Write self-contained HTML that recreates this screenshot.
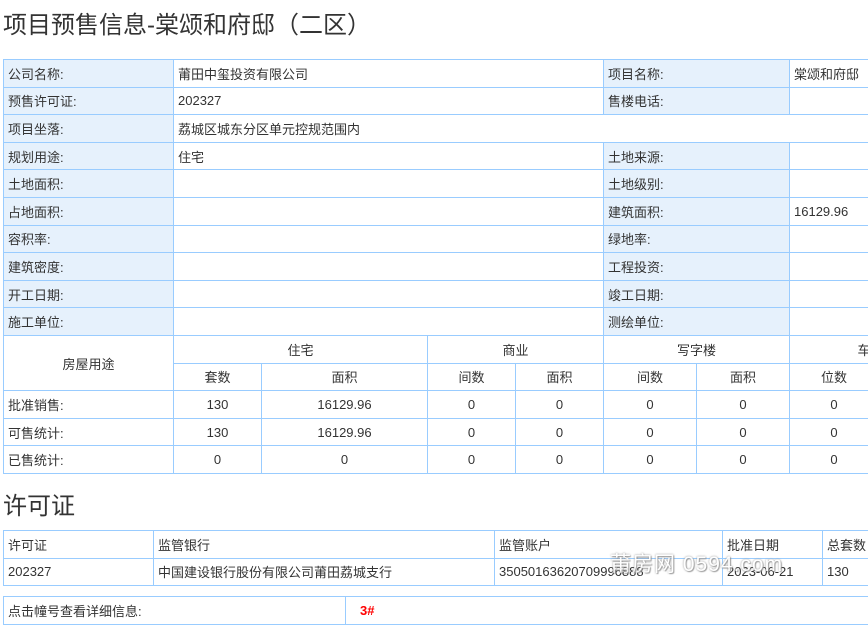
<!DOCTYPE html>
<html><head><meta charset="utf-8"><style>
body{margin:0;background:#fff;width:868px;height:629px;overflow:hidden;position:relative;font-family:"Liberation Sans","Noto Sans CJK SC",sans-serif;color:#333;font-size:13px}
h1{position:absolute;left:3px;top:9px;margin:0;font-size:24px;font-weight:normal;line-height:34px;color:#333}
h2{position:absolute;left:3px;top:490px;margin:0;font-size:24px;font-weight:normal;line-height:34px;color:#333}
table{position:absolute;border-collapse:collapse;table-layout:fixed}
td{border:1px solid #9cf;padding:0 0 0 4px;height:26.6px;white-space:nowrap;overflow:hidden}
.l{background:#e6f1fc}
.c td{text-align:center;padding:0}
.wm{position:absolute;left:610px;top:548px;font-size:21px;color:#fff;text-shadow:0 0 2px #888,1px 1px 1px #999;letter-spacing:1px;opacity:.9}
</style></head><body>
<h1>项目预售信息-棠颂和府邸（二区）</h1>
<table style="left:3px;top:59px;width:886px">
<colgroup><col style="width:170px"><col style="width:430px"><col style="width:186px"><col style="width:100px"></colgroup>
<tr><td class="l">公司名称:</td><td>莆田中玺投资有限公司</td><td class="l">项目名称:</td><td>棠颂和府邸（</td></tr>
<tr><td class="l">预售许可证:</td><td>202327</td><td class="l">售楼电话:</td><td></td></tr>
<tr><td class="l">项目坐落:</td><td colspan="3">荔城区城东分区单元控规范围内</td></tr>
<tr><td class="l">规划用途:</td><td>住宅</td><td class="l">土地来源:</td><td></td></tr>
<tr><td class="l">土地面积:</td><td></td><td class="l">土地级别:</td><td></td></tr>
<tr><td class="l">占地面积:</td><td></td><td class="l">建筑面积:</td><td>16129.96</td></tr>
<tr><td class="l">容积率:</td><td></td><td class="l">绿地率:</td><td></td></tr>
<tr><td class="l">建筑密度:</td><td></td><td class="l">工程投资:</td><td></td></tr>
<tr><td class="l">开工日期:</td><td></td><td class="l">竣工日期:</td><td></td></tr>
<tr><td class="l">施工单位:</td><td></td><td class="l">测绘单位:</td><td></td></tr>
</table>
<table class="c" style="left:3px;top:335px;width:948px">
<colgroup><col style="width:170px"><col style="width:88px"><col style="width:166px"><col style="width:88px"><col style="width:88px"><col style="width:93px"><col style="width:93px"><col style="width:89px"><col style="width:73px"></colgroup>
<tr><td rowspan="2">房屋用途</td><td colspan="2">住宅</td><td colspan="2">商业</td><td colspan="2">写字楼</td><td colspan="2">车库</td></tr>
<tr><td>套数</td><td>面积</td><td>间数</td><td>面积</td><td>间数</td><td>面积</td><td>位数</td><td>面积</td></tr>
<tr><td style="text-align:left;padding-left:4px">批准销售:</td><td>130</td><td>16129.96</td><td>0</td><td>0</td><td>0</td><td>0</td><td>0</td><td>0</td></tr>
<tr><td style="text-align:left;padding-left:4px">可售统计:</td><td>130</td><td>16129.96</td><td>0</td><td>0</td><td>0</td><td>0</td><td>0</td><td>0</td></tr>
<tr><td style="text-align:left;padding-left:4px">已售统计:</td><td>0</td><td>0</td><td>0</td><td>0</td><td>0</td><td>0</td><td>0</td><td>0</td></tr>
</table>
<h2>许可证</h2>
<table style="left:3px;top:530px;width:900px">
<colgroup><col style="width:150px"><col style="width:341px"><col style="width:228px"><col style="width:100px"><col style="width:81px"></colgroup>
<tr><td>许可证</td><td>监管银行</td><td>监管账户</td><td>批准日期</td><td>总套数</td></tr>
<tr><td>202327</td><td>中国建设银行股份有限公司莆田荔城支行</td><td>35050163620709996888</td><td>2023-06-21</td><td>130</td></tr>
</table>
<table style="left:3px;top:596px;width:900px">
<colgroup><col style="width:342px"><col style="width:558px"></colgroup>
<tr><td style="height:27px">点击幢号查看详细信息:</td><td style="padding-left:14px;color:#f00;font-weight:bold">3#</td></tr>
</table>
<div class="wm">莆房网 0594.com</div>
</body></html>
